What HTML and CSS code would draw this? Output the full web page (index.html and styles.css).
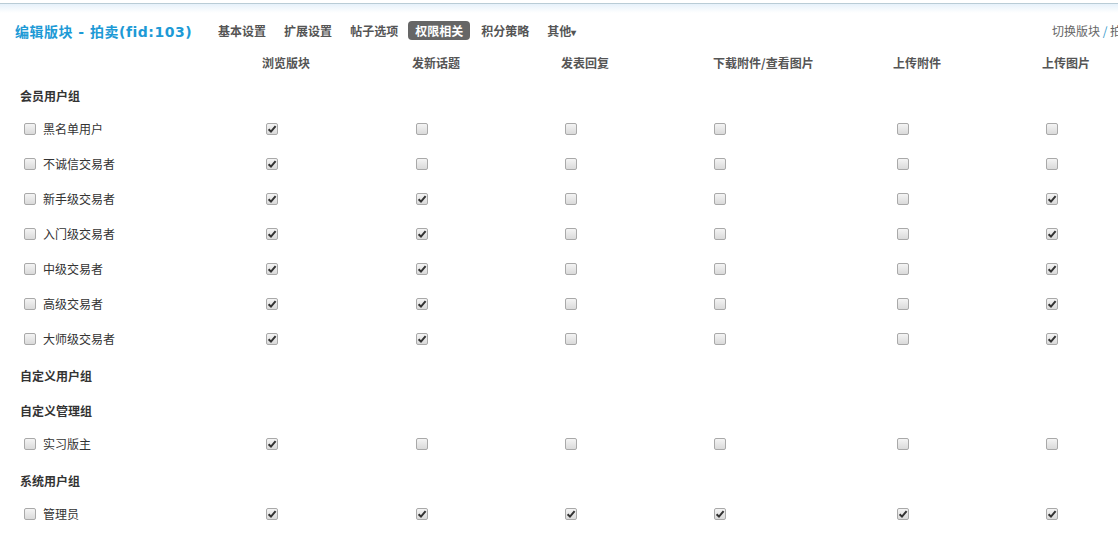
FILE: index.html
```html
<!DOCTYPE html>
<html>
<head>
  <title>编辑版块 - 拍卖</title>
  <link rel="stylesheet" href="styles.css">
</head>
<body>

  <div class="top">
    <h1 class="title">编辑版块 - 拍卖(fid:103)</h1>
    <ul class="nav">
      <li>基本设置</li>
      <li>扩展设置</li>
      <li>帖子选项</li>
      <li class="current">权限相关</li>
      <li>积分策略</li>
      <li>其他<span class="arrow">▾</span></li>
    </ul>
    <div class="switch">切换版块 <span class="slash">/</span> 拍卖</div>
  </div>

  <div class="perm">
    <div class="row head">
      <div></div>
      <div>浏览版块</div>
      <div>发新话题</div>
      <div>发表回复</div>
      <div>下载附件/查看图片</div>
      <div>上传附件</div>
      <div>上传图片</div>
    </div>

    <div class="group">会员用户组</div>
    <div class="row">
      <div class="name"><span class="cb"></span>黑名单用户</div>
      <div><span class="cb on"></span></div><div><span class="cb"></span></div><div><span class="cb"></span></div>
      <div><span class="cb"></span></div><div><span class="cb"></span></div><div><span class="cb"></span></div>
    </div>
    <div class="row">
      <div class="name"><span class="cb"></span>不诚信交易者</div>
      <div><span class="cb on"></span></div><div><span class="cb"></span></div><div><span class="cb"></span></div>
      <div><span class="cb"></span></div><div><span class="cb"></span></div><div><span class="cb"></span></div>
    </div>
    <div class="row">
      <div class="name"><span class="cb"></span>新手级交易者</div>
      <div><span class="cb on"></span></div><div><span class="cb on"></span></div><div><span class="cb"></span></div>
      <div><span class="cb"></span></div><div><span class="cb"></span></div><div><span class="cb on"></span></div>
    </div>
    <div class="row">
      <div class="name"><span class="cb"></span>入门级交易者</div>
      <div><span class="cb on"></span></div><div><span class="cb on"></span></div><div><span class="cb"></span></div>
      <div><span class="cb"></span></div><div><span class="cb"></span></div><div><span class="cb on"></span></div>
    </div>
    <div class="row">
      <div class="name"><span class="cb"></span>中级交易者</div>
      <div><span class="cb on"></span></div><div><span class="cb on"></span></div><div><span class="cb"></span></div>
      <div><span class="cb"></span></div><div><span class="cb"></span></div><div><span class="cb on"></span></div>
    </div>
    <div class="row">
      <div class="name"><span class="cb"></span>高级交易者</div>
      <div><span class="cb on"></span></div><div><span class="cb on"></span></div><div><span class="cb"></span></div>
      <div><span class="cb"></span></div><div><span class="cb"></span></div><div><span class="cb on"></span></div>
    </div>
    <div class="row">
      <div class="name"><span class="cb"></span>大师级交易者</div>
      <div><span class="cb on"></span></div><div><span class="cb on"></span></div><div><span class="cb"></span></div>
      <div><span class="cb"></span></div><div><span class="cb"></span></div><div><span class="cb on"></span></div>
    </div>

    <div class="group">自定义用户组</div>

    <div class="group">自定义管理组</div>
    <div class="row">
      <div class="name"><span class="cb"></span>实习版主</div>
      <div><span class="cb on"></span></div><div><span class="cb"></span></div><div><span class="cb"></span></div>
      <div><span class="cb"></span></div><div><span class="cb"></span></div><div><span class="cb"></span></div>
    </div>

    <div class="group">系统用户组</div>
    <div class="row">
      <div class="name"><span class="cb"></span>管理员</div>
      <div><span class="cb on"></span></div><div><span class="cb on"></span></div><div><span class="cb on"></span></div>
      <div><span class="cb on"></span></div><div><span class="cb on"></span></div><div><span class="cb on"></span></div>
    </div>
  </div>

</body>
</html>
```

FILE: styles.css
```css
html, body {
  overflow: hidden;
}

body {
  margin: 0;
  font-family: "Noto Sans CJK SC", sans-serif;
  font-size: 12px;
  color: #333;
  background-color: #fff;
}

.top {
  display: flex;
  align-items: center;
  width: 1157px;
  height: 37px;
  margin-top: 3px;
  padding: 8px 0 0 15px;
  border-top: 1px solid #b9ccd6;
  background: linear-gradient(#e6f1fa, #fff 9px);
}

.title {
  margin: 0;
  font-family: "DejaVu Sans", "Noto Sans CJK SC", sans-serif;
  font-size: 14px;
  font-weight: bold;
  letter-spacing: 0.5px;
  color: #1d9ad6;
  white-space: nowrap;
}

.nav {
  display: flex;
  align-items: center;
  margin: 0 0 0 20px;
  padding: 0;
  list-style: none;
}

.nav li {
  margin-right: 6px;
  padding: 0 6px;
  height: 19px;
  line-height: 19px;
  font-weight: bold;
  color: #555;
  white-space: nowrap;
}

.nav .current {
  margin-left: -2px;
  margin-right: 5px;
  padding: 0 7px;
  border-radius: 4px;
  background-color: #666;
  color: #fff;
}

.arrow {
  font-size: 10px;
}

.switch {
  margin-left: auto;
  width: 120px;
  color: #666;
  white-space: nowrap;
}

.slash {
  color: #39c;
}

.perm {
  width: 1172px;
  margin-left: 20px;
}

.row {
  display: grid;
  grid-template-columns: 242px 150px 149px 152px 180px 149px 150px;
  height: 35px;
  align-items: center;
}

.row.head {
  height: 27px;
  font-weight: bold;
  color: #555;
}

.name {
  display: flex;
  align-items: center;
}

.group {
  display: flex;
  align-items: center;
  box-sizing: border-box;
  height: 35px;
  padding-top: 4px;
  font-weight: bold;
  color: #333;
}

.cb {
  display: block;
  box-sizing: border-box;
  width: 12px;
  height: 12px;
  margin-left: 4px;
  border: 1px solid #a9a9a9;
  border-radius: 2px;
  background: linear-gradient(#f4f4f4, #dadada);
}

.row > div:nth-child(5) .cb {
  margin-left: 1px;
}

.name .cb {
  margin-right: 7px;
}

.cb.on {
  background: url("data:image/svg+xml;utf8,<svg xmlns='http://www.w3.org/2000/svg' width='10' height='10' viewBox='0 0 10 10'><path d='M1.6 5.2 L4 7.6 L8.6 2.2' fill='none' stroke='%23333' stroke-width='2'/></svg>") center no-repeat, linear-gradient(#f4f4f4, #dadada);
}
```
